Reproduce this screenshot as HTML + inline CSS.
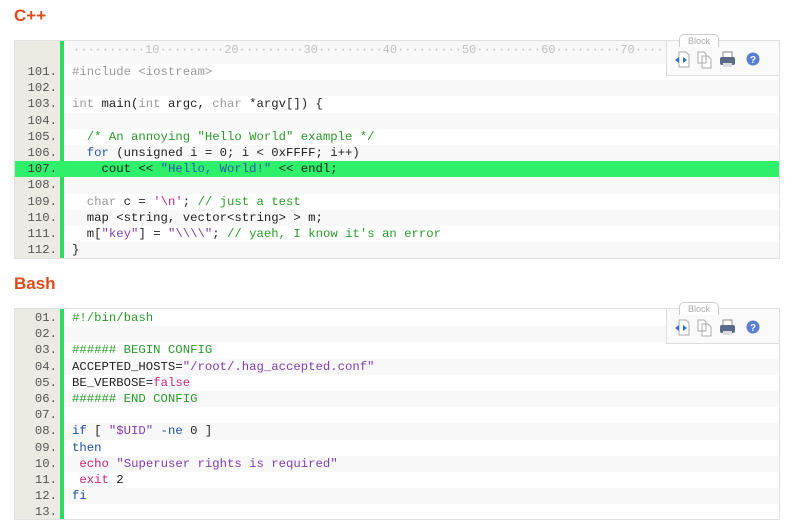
<!DOCTYPE html>
<html><head><style>
body{margin:0;background:#fff;width:800px;height:508px;overflow:hidden;position:relative;font-family:"Liberation Mono",monospace;}
h2{position:absolute;left:14px;margin:0;font:bold 17px "Liberation Sans",sans-serif;color:#e04a1c;}
.box{position:absolute;left:14px;width:764px;border:1px solid #e0e0e0;background:#fff;}
.g{position:absolute;left:0;top:0;bottom:0;width:45px;background:#ebebe4;z-index:1;}
.bar{position:absolute;left:45px;top:0;bottom:0;width:4px;background:#2ddc5a;z-index:1;}
.r{position:relative;height:16.2px;line-height:16.2px;font-size:12.3px;white-space:pre;color:#222;}
.r.a{background:#f8f8f8}
.r .n{position:absolute;left:0;width:42px;text-align:right;color:#555;z-index:2;}
.r .c{position:absolute;left:57px;}
.r.h{background:#2ef06a;z-index:3}
.r.h .n{color:#333}
.ruler{height:23px;line-height:18px;font-size:12px;color:#c0c0c0;background:#f8f8f8;white-space:pre;}
.ruler span{position:absolute;left:58px;}
.k{color:#999}.b{color:#1f5aa8}.cm{color:#2a9a2a}.s{color:#2a5ab0}.p{color:#8040b0}.m{color:#d0207a}.d{color:#1a4f9a}
.tb{position:absolute;right:0;width:112px;height:34px;border-left:1px solid #ddd;border-bottom:1px solid #ddd;background:#fafafa;z-index:4}
.tab{position:absolute;left:12px;top:-7px;width:38px;height:12px;border:1px solid #ccc;border-bottom:none;border-radius:5px 5px 0 0;background:#fff;font:9px "Liberation Sans",sans-serif;color:#aaa;text-align:center;line-height:12px;}
</style></head><body>
<h2 style="top:6px">C++</h2>
<div class="box" style="top:40px;height:217px">
<div class="g"></div><div class="bar"></div>
<div class="ruler" style="position:relative"><span>··········10·········20·········30·········40·········50·········60·········70··········</span></div>
<div class="r"><span class="n">101.</span><span class="c k">#include &lt;iostream&gt;</span></div>
<div class="r a"><span class="n">102.</span></div>
<div class="r"><span class="n">103.</span><span class="c"><span class="k">int</span> main(<span class="k">int</span> argc, <span class="k">char</span> *argv[]) {</span></div>
<div class="r a"><span class="n">104.</span></div>
<div class="r"><span class="n">105.</span><span class="c">  <span class="cm">/* An annoying "Hello World" example */</span></span></div>
<div class="r a"><span class="n">106.</span><span class="c">  <span class="b">for</span> (unsigned i = 0; i &lt; 0xFFFF; i++)</span></div>
<div class="r h"><span class="n">107.</span><span class="c">    cout &lt;&lt; <span class="s">"Hello, World!"</span> &lt;&lt; endl;</span></div>
<div class="r a"><span class="n">108.</span></div>
<div class="r"><span class="n">109.</span><span class="c">  <span class="k">char</span> c = <span class="m">'\n'</span>; <span class="cm">// just a test</span></span></div>
<div class="r a"><span class="n">110.</span><span class="c">  map &lt;string, vector&lt;string&gt; &gt; m;</span></div>
<div class="r"><span class="n">111.</span><span class="c">  m[<span class="p">"key"</span>] = <span class="p">"\\\\"</span>; <span class="cm">// yaeh, I know it's an error</span></span></div>
<div class="r a"><span class="n">112.</span><span class="c">}</span></div>
<div class="tb" style="top:0"><div class="tab">Block</div>
<svg width="112" height="34" style="position:absolute;left:0;top:0">
<g transform="translate(8,10)"><path d="M4 1h7l3 3v12h-10z" fill="#fff" stroke="#aaa"/><path d="M0 9l4-3v6zM12 9l-4-3v6z" fill="#2a6fd0"/></g>
<g transform="translate(30,10)"><path d="M1 1h6l2 2v9h-8z M5 5h6l3 3v9h-9z" fill="#fff" stroke="#aaa"/></g>
<g transform="translate(52,11)"><rect x="4" y="0" width="9" height="6" fill="#fff" stroke="#888"/><rect x="1" y="5" width="15" height="8" rx="2" fill="#5a6a88"/><rect x="4" y="11" width="9" height="4" fill="#ddd"/></g>
<circle cx="86" cy="18" r="6.5" fill="#5a7fd0"/><text x="86" y="22" font-size="10" font-family="Liberation Sans" font-weight="bold" fill="#fff" text-anchor="middle">?</text>
</svg></div>
</div>

<h2 style="top:274px">Bash</h2>
<div class="box" style="top:308px;height:210px">
<div class="g"></div><div class="bar"></div>
<div style="height:1px"></div>
<div class="r"><span class="n">01.</span><span class="c cm">#!/bin/bash</span></div>
<div class="r a"><span class="n">02.</span></div>
<div class="r"><span class="n">03.</span><span class="c cm">###### BEGIN CONFIG</span></div>
<div class="r a"><span class="n">04.</span><span class="c">ACCEPTED_HOSTS=<span class="p">"/root/.hag_accepted.conf"</span></span></div>
<div class="r"><span class="n">05.</span><span class="c">BE_VERBOSE=<span class="m">false</span></span></div>
<div class="r a"><span class="n">06.</span><span class="c cm">###### END CONFIG</span></div>
<div class="r"><span class="n">07.</span></div>
<div class="r a"><span class="n">08.</span><span class="c"><span class="d">if</span> [ <span class="p">"$UID"</span> <span class="d">-ne</span> 0 ]</span></div>
<div class="r"><span class="n">09.</span><span class="c d">then</span></div>
<div class="r a"><span class="n">10.</span><span class="c"> <span class="m">echo</span> <span class="p">"Superuser rights is required"</span></span></div>
<div class="r"><span class="n">11.</span><span class="c"> <span class="m">exit</span> 2</span></div>
<div class="r a"><span class="n">12.</span><span class="c d">fi</span></div>
<div class="r"><span class="n">13.</span></div>
<div class="tb" style="top:0"><div class="tab">Block</div>
<svg width="112" height="34" style="position:absolute;left:0;top:0">
<g transform="translate(8,10)"><path d="M4 1h7l3 3v12h-10z" fill="#fff" stroke="#aaa"/><path d="M0 9l4-3v6zM12 9l-4-3v6z" fill="#2a6fd0"/></g>
<g transform="translate(30,10)"><path d="M1 1h6l2 2v9h-8z M5 5h6l3 3v9h-9z" fill="#fff" stroke="#aaa"/></g>
<g transform="translate(52,11)"><rect x="4" y="0" width="9" height="6" fill="#fff" stroke="#888"/><rect x="1" y="5" width="15" height="8" rx="2" fill="#5a6a88"/><rect x="4" y="11" width="9" height="4" fill="#ddd"/></g>
<circle cx="86" cy="18" r="6.5" fill="#5a7fd0"/><text x="86" y="22" font-size="10" font-family="Liberation Sans" font-weight="bold" fill="#fff" text-anchor="middle">?</text>
</svg></div>
</div>
</body></html>
